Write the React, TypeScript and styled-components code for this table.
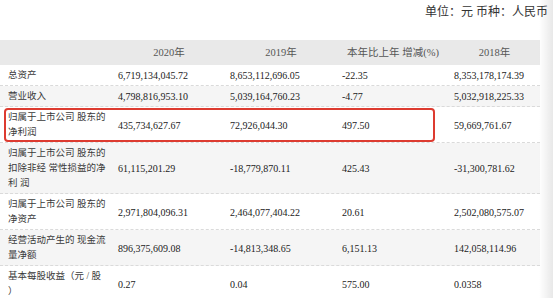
import styled, { createGlobalStyle } from "styled-components";

const GlobalStyle = createGlobalStyle`
  body {
    margin: 0;
    background: #fff;
  }
`

const Page = styled.div`
  position: relative;
  width: 553px;
  height: 298px;
  overflow: hidden;
  font-family: "Liberation Serif", "Noto Sans CJK SC", serif;
  color: #333;
`

const UnitBar = styled.div`
  display: flex;
  justify-content: flex-end;
  box-sizing: border-box;
  height: 40px;
  padding: 4px 5px 0 0;
  font-size: 12px;
  line-height: 16px;
  color: #333;
`

const Table = styled.div`
  width: 540px;
`

const HeaderRow = styled.div`
  display: grid;
  grid-template-columns: 113px 112px 112px 112px 91px;
  background: #e9e9e9;
  padding: 5px 0;
  font-size: 10.5px;
  line-height: 15px;
  color: #555;
`

const HeadCell = styled.div`
  text-align: center;
  white-space: nowrap;
`

const Row = styled.div<{ $alt: boolean; $mark?: boolean }>`
  position: relative;
  display: grid;
  grid-template-columns: 113px 112px 112px 112px 91px;
  background: ${p => (p.$alt ? "#f5f5f5" : "#fff")};
  border-bottom: 1px dashed #dadada;
  font-size: 10px;
  line-height: 15px;

  ${p => p.$mark && `
    &::after {
      content: '';
      position: absolute;
      left: 4px;
      top: 1px;
      bottom: 0;
      width: 427px;
      border: 2px solid #dd3b30;
      border-radius: 4px;
      pointer-events: none;
    }
  `}
`

const Label = styled.div`
  padding: 3px 0 2px 8px;
  font-size: 9.5px;
  white-space: nowrap;
  color: #3a3a3a;
`

const Value = styled.div`
  display: flex;
  align-items: center;
  padding: 3px 0 2px 5px;
  white-space: nowrap;
  color: #222;
`

const Fade = styled.div`
  position: absolute;
  top: 0;
  right: 0;
  width: 14px;
  height: 100%;
  background: linear-gradient(to right, rgba(0, 0, 0, 0), rgba(0, 0, 0, 0.09));
`

const headers = ["", "2020年", "2019年", "本年比上年 增减(%)", "2018年"];

const rows = [
  { label: ["总资产"], values: ["6,719,134,045.72", "8,653,112,696.05", "-22.35", "8,353,178,174.39"] },
  { label: ["营业收入"], values: ["4,798,816,953.10", "5,039,164,760.23", "-4.77", "5,032,918,225.33"] },
  { label: ["归属于上市公司 股东的", "净利润"], values: ["435,734,627.67", "72,926,044.30", "497.50", "59,669,761.67"], mark: true },
  { label: ["归属于上市公司 股东的", "扣除非经 常性损益的净", "利 润"], values: ["61,115,201.29", "-18,779,870.11", "425.43", "-31,300,781.62"] },
  { label: ["归属于上市公司 股东的", "净资产"], values: ["2,971,804,096.31", "2,464,077,404.22", "20.61", "2,502,080,575.07"] },
  { label: ["经营活动产生的 现金流", "量净额"], values: ["896,375,609.08", "-14,813,348.65", "6,151.13", "142,058,114.96"] },
  { label: ["基本每股收益（元 / 股", "）"], values: ["0.27", "0.04", "575.00", "0.0358"] },
];

const App = () => {
  return (
    <>
      <GlobalStyle />
      <Page>
        <UnitBar>单位：元 币种：人民币</UnitBar>
        <Table>
          <HeaderRow>
            {headers.map((h, i) => (
              <HeadCell key={i}>{h}</HeadCell>
            ))}
          </HeaderRow>
          {rows.map((row, i) => (
            <Row key={i} $alt={i % 2 === 1} $mark={row.mark}>
              <Label>
                {row.label.map((line, j) => (
                  <div key={j}>{line}</div>
                ))}
              </Label>
              {row.values.map((v, j) => (
                <Value key={j}>{v}</Value>
              ))}
            </Row>
          ))}
        </Table>
        <Fade />
      </Page>
    </>
  );
};

export default App;
